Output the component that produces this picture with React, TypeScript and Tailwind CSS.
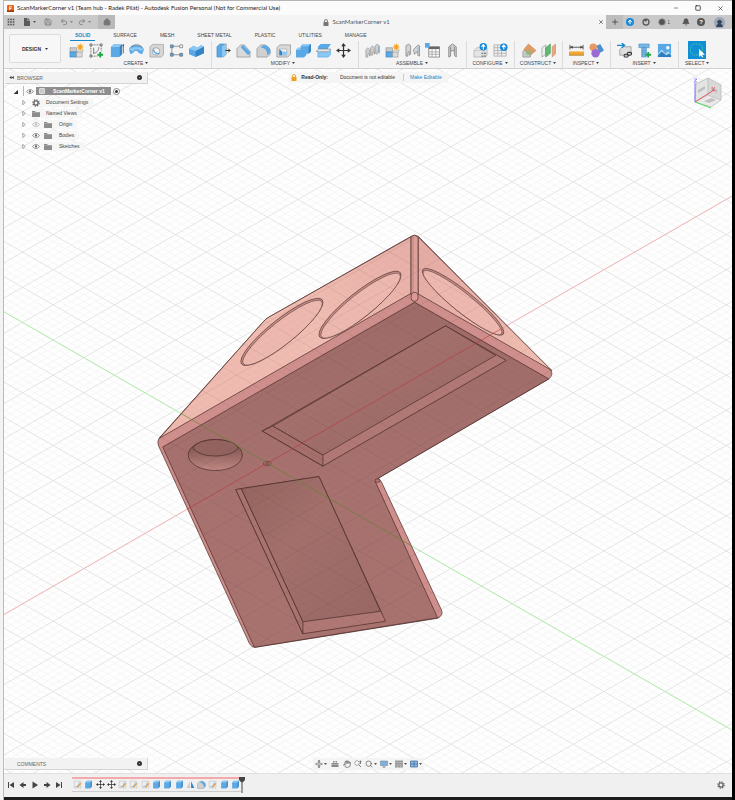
import { ReactNode } from "react"
import {
	ArrowUp,
	Bell,
	Clock,
	Hand,
	House,
	Minus,
	Plus,
	Redo2,
	Save,
	Search,
	Square,
	Undo2,
	UserRound,
	X,
} from "lucide-react"

const BLUE = "#5aa9e6"
const DARK_BLUE = "#3584c4"
const LIGHT_BLUE = "#8cc8f4"

const Caret = ({ className = "" }: { className?: string }) => (
	<svg viewBox="0 0 6 4" className={`h-[2px] w-[3px] ${className}`} aria-hidden="true">
		<path d="M0 0h6L3 4z" fill="currentColor" />
	</svg>
)

const Gear = () => (
	<svg viewBox="0 0 16 16" className="size-2" aria-hidden="true">
		<circle cx="8" cy="8" r="6.300" fill="none" stroke="#666" strokeWidth="2.500" strokeDasharray="2.500 2.450" />
		<circle cx="8" cy="8" r="4.200" fill="none" stroke="#666" strokeWidth="2.600" />
	</svg>
)

interface CubeProps {
	top?: string
	front?: string
	side?: string
}

/* extruded box, the base of most of the solid modelling icons */
const Cube = ({ top = LIGHT_BLUE, front = BLUE, side = DARK_BLUE }: CubeProps) => (
	<g>
		<path d="M2 4L5 1H14L11 4Z" fill={top} />
		<path d="M2 4H11V15H2Z" fill={front} />
		<path d="M11 4L14 1V12L11 15Z" fill={side} />
	</g>
)

const Spark = () => (
	<path
		d="M12 0l.8 2.400L15 1.300l-1.100 2.200L16 4.300l-2.100.8L15 7.300l-2.200-1.100L12 8.500l-.8-2.300L9 7.300l1.100-2.200L8 4.300l2.100-.8L9 1.300l2.200 1.100z"
		fill="#f5a623"
	/>
)

const Component = () => (
	<g>
		<path d="M1 5h7v4.500H1z" fill="#c9c9c9" stroke="#8c8c8c" strokeWidth=".6" />
		<path d="M1 9.500h7V15H1z" fill={BLUE} stroke={DARK_BLUE} strokeWidth=".6" />
		<path d="M8 9.500h6V15H8z" fill="#dcdcdc" stroke="#8c8c8c" strokeWidth=".6" />
		<path d="M8 9.500l2-2h5.500l-1.500 2z" fill="#efefef" stroke="#8c8c8c" strokeWidth=".5" />
		<Spark />
	</g>
)

const GreenPlus = () => <path d="M12 9.500v6M9 12.500h6" stroke="#22a447" strokeWidth="2" />

const icons: Record<string, ReactNode> = {
	"New Component": <Component />,
	"Create Sketch": (
		<g fill="none" stroke="#555" strokeWidth=".8">
			<path d="M2 2h11M2 2v12M13 2v7M2 14h7" strokeDasharray="2 1" />
			<path d="M4.500 11C8 11 10.500 8 10.500 4.500M5 5v6" />
			<g fill="#f4f4f4">
				<path d="M1 1h2v2H1zM12 1h2v2h-2zM1 13h2v2H1z" />
			</g>
			<GreenPlus />
		</g>
	),
	Extrude: (
		<g>
			<Cube />
			<path d="M15.300 11V2M14.300 3.500l1-2 .7 2" stroke="#333" strokeWidth=".7" fill="none" />
		</g>
	),
	Revolve: (
		<g>
			<path d="M0 7C1 1 14 1 16 7L14 12 10 10.500C10 8 5.500 8 5 10L1.500 12z" fill={BLUE} />
			<path d="M0 7C2 3.500 13 3.500 16 7L12 8.500C10 6.500 6 6.500 4.500 9z" fill={LIGHT_BLUE} />
			<path d="M2 4.500C5 1 11 1 14 4.500" stroke="#555" strokeWidth=".7" fill="none" />
		</g>
	),
	Hole: (
		<g>
			<path d="M1 4l3-2.500h11.500v11L13 15H1z" fill="#d6d6d6" stroke="#999" strokeWidth=".7" />
			<circle cx="7.500" cy="9" r="4" fill="#f5f5f5" stroke="#888" strokeWidth=".7" />
			<path d="M5 7a4 4 0 0 0 6 4 5 5 0 0 1-6-4" fill={BLUE} stroke={BLUE} />
		</g>
	),
	Pattern: (
		<g fill={BLUE} stroke="#666" strokeWidth=".7">
			<path d="M3 3.500h10M3 3.500v9h10" fill="none" />
			<path d="M1.500 2h3v3h-3zM11.500 11h3v3h-3zM1.500 11h3v3h-3z" />
			<path d="M11.500 2h3v3h-3z" fill="#fff" />
		</g>
	),
	"Create Form": (
		<g>
			<path d="M0 6L5 3 9 5 13 2 16 4V11L7 15 0 12z" fill={BLUE} />
			<path d="M0 6L5 3 9 5 13 2 16 4 7 8.500z" fill={LIGHT_BLUE} />
			<path d="M7 8.500L16 4V11L7 15z" fill={DARK_BLUE} />
		</g>
	),
	"Press Pull": (
		<g>
			<path d="M1 4l3-3h5v11l-3 3H1z" fill={BLUE} stroke={DARK_BLUE} strokeWidth=".6" />
			<path d="M6 4l3-3h2V12L8 15H6z" fill={LIGHT_BLUE} stroke="#888" strokeWidth=".5" />
			<path d="M10 8h5M13 6l2 2-2 2" stroke="#222" fill="none" />
		</g>
	),
	Fillet: (
		<g>
			<path d="M1 6l4-4h4l6 7v6H1z" fill="#d9d9d9" stroke="#8c8c8c" strokeWidth=".7" />
			<path d="M5 4.500L7.500 2l8 8-2.500 3z" fill={BLUE} />
		</g>
	),
	Chamfer: (
		<g>
			<path d="M1 6l4-4h5l5 5v5l-3 3H1z" fill="#d0d0d0" stroke="#8c8c8c" strokeWidth=".7" />
			<path d="M5 5l3-3c5 0 7.500 3 7.500 8L12 13C12 8 10 5 5 5z" fill={BLUE} />
		</g>
	),
	Shell: (
		<g>
			<path d="M1 5l3-3h11.500v10l-3 3H1z" fill="#d9d9d9" stroke="#888" strokeWidth=".7" />
			<path d="M3.500 6.500h8V13h-8z" fill="#f4f4f4" stroke="#999" strokeWidth=".5" />
			<path d="M3.500 6.500l3 2.500v4h-3z" fill={DARK_BLUE} />
			<path d="M6.500 9h5v4h-5z" fill={LIGHT_BLUE} />
		</g>
	),
	Combine: (
		<g>
			<path d="M5 3.500L7.500 1H16v8l-2.500 2.500H11V13l-2.500 2.500H0v-8L2.500 5H5z" fill={BLUE} />
			<path d="M5 3.500L7.500 1H16l-2.500 2.500zM0 7.500L2.500 5H5v2.500z" fill={LIGHT_BLUE} />
			<path d="M13.500 3.500L16 1v8l-2.500 2.500z" fill={DARK_BLUE} />
		</g>
	),
	"Split Body": (
		<g>
			<path d="M2 4l3-3h11l-3 4v2H2z" fill={BLUE} />
			<path d="M0 9l3-2.500h13L13 9z" fill="#eee" stroke="#777" strokeWidth=".6" />
			<path d="M2 10h11l3-2v4l-3 3H2z" fill={LIGHT_BLUE} stroke={BLUE} strokeWidth=".7" />
		</g>
	),
	Move: (
		<g>
			<path d="M8 2v12M2 8h12" stroke="#333" strokeWidth="1.300" />
			<path d="M8 0l2.500 3.500h-5zM8 16l2.500-3.500h-5zM0 8l3.500-2.500v5zM16 8l-3.500-2.500v5z" fill="#333" />
		</g>
	),
	"New Joint": (
		<g fill="#cfcfcf" stroke="#888" strokeWidth=".6">
			<path d="M1 15V7l2-2 2 2v7l-1-3-1 1v3zM6 13V5l2-2 2 2v7l-1-3-1 1v3z" />
			<path d="M11 11V3l2-2 2 2v8l-1-3-1 1v3z" />
			<path d="M15 3v7" stroke={BLUE} strokeWidth="1" />
		</g>
	),
	Assemble: <Component />,
	Joint: (
		<g stroke="#777" strokeWidth=".7" fill="#d4d4d4">
			<path d="M1 14V3l3-2 2 2v9l-1.500 1V9L3 10v4zM9 7l5-5 1.500 1v11l-2-1V9L10 12z" />
			<path d="M14 4v6" stroke={BLUE} />
		</g>
	),
	"Bill of Materials": (
		<g>
			<path d="M4 4h11.500v11H4z" fill="#fff" stroke="#777" strokeWidth=".8" />
			<path d="M4 4h11.500v2.500H4z" fill="#666" />
			<path d="M4 9.500h11.500M4 12h11.500M7.500 6v9M11.500 6v9" stroke="#999" strokeWidth=".8" />
			<path d="M0 0h5v5H0z" fill={BLUE} />
		</g>
	),
	"Rigid Group": (
		<path
			d="M4 15V4l4-3 4 3v11l-2-2V9L8 8 6 9v5zM6 4v5m4-5v5"
			fill="#cfcfcf"
			stroke="#777"
			strokeWidth=".8"
		/>
	),
	Configure: (
		<g>
			<path d="M1 8l3-3h11v8l-2 2H1z" fill="#e4e4e4" stroke="#aaa" strokeWidth=".7" />
			<path d="M1 8h11v7" fill="none" stroke="#bbb" strokeWidth=".6" />
			<circle cx="11" cy="4" r="4" fill="#1688d8" />
			<path d="M11 7V2M9 4l2-2.300L13 4" stroke="#fff" strokeWidth="1.200" fill="none" />
			<path d="M9 11h6M9 14h6" stroke="#777" strokeWidth="1.200" strokeDasharray="2 1" />
		</g>
	),
	"Configuration Table": (
		<g>
			<path d="M1 2h13v12H1z" fill="#eee" stroke="#aaa" strokeWidth=".8" />
			<path d="M1 5h13M1 8h13M1 11h13M5 2v12M9 2v12" stroke="#aaa" strokeWidth=".8" />
			<circle cx="11.500" cy="4.500" r="4" fill="#1688d8" />
			<path d="M11.500 7V2.500M9.500 4.500l2-2.300 2 2.300" stroke="#fff" strokeWidth="1.200" fill="none" />
		</g>
	),
	"Offset Plane": (
		<g>
			<path d="M2 9l5-4 3 2v8H2z" fill="#ccc" stroke="#888" strokeWidth=".7" />
			<path d="M3 7l5-6 8 7-6 5z" fill="#e29a63" stroke="#b97842" strokeWidth=".5" />
			<path d="M5 9l4-2 3 2-2 4H5z" fill="#79bd8b" opacity=".6" />
		</g>
	),
	Midplane: (
		<g>
			<path d="M1 5l4-3v10l-4 3z" fill="#eee" stroke="#888" strokeWidth=".6" />
			<path d="M5 5l5-4v10l-5 4z" fill="#5fba73" stroke="#3f9152" strokeWidth=".6" />
			<path d="M12 4l4-3v10l-4 4z" fill="#eda77c" stroke="#cf845a" strokeWidth=".6" />
		</g>
	),
	Measure: (
		<g>
			<path d="M1 4.500h14M1 2v5M15 2v5" stroke="#444" strokeWidth=".9" />
			<path d="M1 4.500l3-1.500v3zM15 4.500L12 3v3z" fill="#444" />
			<path d="M0 9h16v4H0z" fill="#f0a830" />
			<path d="M0 13h16" stroke="#a87318" strokeWidth=".8" />
		</g>
	),
	Interference: (
		<g>
			<circle cx="4.500" cy="4.500" r="4" fill="#e99a63" />
			<path d="M8 3l4-2 4 7-5 3z" fill="#4e8fd0" />
			<circle cx="7" cy="11" r="4.500" fill="#9a6bd3" />
		</g>
	),
	"Insert Derive": (
		<g>
			<path d="M3 7l3-3h9v7l-2 2H3z" fill="#dedede" stroke="#888" strokeWidth=".7" />
			<path d="M0 2.500h7M5 0l3 2.500L5 5" stroke="#1688d8" strokeWidth="1.500" fill="none" />
			<g fill="none" stroke="#333" strokeWidth="1.100">
				<rect x="7.500" y="12" width="4.500" height="3" rx="1.500" />
				<rect x="11" y="10" width="4.500" height="3" rx="1.500" />
			</g>
		</g>
	),
	"Insert Fastener": (
		<g>
			<path d="M2 1h11v4H2zM5 5h5v10H5z" fill="#78b7e6" stroke="#4b8fc5" strokeWidth=".6" />
			<path d="M5 8h5M5 10h5M5 12h5" stroke="#4b8fc5" strokeWidth=".6" />
			<GreenPlus />
		</g>
	),
	Canvas: (
		<g>
			<path d="M1 1h14v14H1z" fill="#58a8e6" />
			<circle cx="11.500" cy="5" r="1.800" fill="#fff" />
			<path d="M1 12l4-5 4 4.500 3-2.500 3 3v3H1z" fill="#b9dcf5" />
			<path d="M1 13l4-4 5 4 3-2 2 2v2H1z" fill="#2f7fc0" />
		</g>
	),
}

const toolGroups = [
	{
		label: "CREATE",
		wide: true,
		tools: ["New Component", "Create Sketch", "Extrude", "Revolve", "Hole", "Pattern", "Create Form"],
	},
	{
		label: "MODIFY",
		wide: true,
		tools: ["Press Pull", "Fillet", "Chamfer", "Shell", "Combine", "Split Body", "Move"],
	},
	{ label: "ASSEMBLE", tools: ["New Joint", "Assemble", "Joint", "Bill of Materials", "Rigid Group"] },
	{ label: "CONFIGURE", tools: ["Configure", "Configuration Table"] },
	{ label: "CONSTRUCT", tools: ["Offset Plane", "Midplane"] },
	{ label: "INSPECT", tools: ["Measure", "Interference"] },
	{ label: "INSERT", tools: ["Insert Derive", "Insert Fastener", "Canvas"] },
]

const ribbonTabs = ["SOLID", "SURFACE", "MESH", "SHEET METAL", "PLASTIC", "UTILITIES", "MANAGE"]

const TitleBar = () => (
	<header className="flex h-[15px] items-center border-t border-[#b5b5b5] bg-[#fbfbfb] pl-[3px] pr-px">
		<svg viewBox="0 0 16 16" className="mr-[3px] size-[7px] shrink-0" aria-hidden="true">
			<rect width="16" height="16" rx="2" fill="#e8651a" />
			<path d="M0 12h16v4H0z" fill="#a03c08" />
			<path d="M6 12V4h5M6 8h4" stroke="#fff" strokeWidth="2" fill="none" />
		</svg>
		<h1 className="flex-1 truncate font-[Lato,sans-serif] text-[6px] leading-[10px] text-[#222]">
			ScanMarkerCorner v1 (Team hub - Radek Pilát) - Autodesk Fusion Personal (Not for Commercial
			Use)
		</h1>
		<div className="flex text-[#222]">
			<button aria-label="Minimize" className="flex w-[22px] justify-center">
				<Minus className="size-[6px]" />
			</button>
			<button aria-label="Maximize" className="flex w-[22px] justify-center">
				<Square className="size-[6px]" strokeWidth={3} />
			</button>
			<button aria-label="Close" className="flex w-[22px] justify-center">
				<X className="size-[7px]" />
			</button>
		</div>
	</header>
)

const DocumentTabs = () => (
	<div className="flex h-[14px] items-center bg-[#c9c9c9] text-[#555]">
		<div className="flex w-[94px] shrink-0 items-center pl-[3px]">
			<button aria-label="Data panel">
				<svg viewBox="0 0 16 16" className="size-2">
					<path
						d="M1 1h4v4H1zM6 1h4v4H6zM11 1h4v4h-4zM1 6h4v4H1zM6 6h4v4H6zM11 6h4v4h-4zM1 11h4v4H1zM6 11h4v4H6zM11 11h4v4h-4z"
						fill="#555"
						stroke="#c9c9c9"
						strokeWidth=".8"
					/>
				</svg>
			</button>
			<button aria-label="File" className="ml-2 flex items-center gap-[2px]">
				<svg viewBox="0 0 16 16" className="size-2">
					<path d="M2 0h7v6h5v10H2zM10 0l4 5h-4z" fill="#5c5c5c" />
				</svg>
				<Caret />
			</button>
			<button aria-label="Save" className="ml-2 text-[#888]">
				<Save className="size-2" strokeWidth={3} />
			</button>
			<button aria-label="Undo" className="ml-2 flex items-center gap-[2px] text-[#888]">
				<Undo2 className="size-2" strokeWidth={3} />
				<Caret />
			</button>
			<button aria-label="Redo" className="ml-[5px] flex items-center gap-[2px] text-[#888]">
				<Redo2 className="size-2" strokeWidth={3} />
				<Caret />
			</button>
		</div>
		<button aria-label="Home" className="flex h-full w-[17px] items-center justify-center bg-[#b9b9b9]">
			<House className="size-2 fill-[#777] text-[#777]" />
		</button>
		<div className="flex h-full flex-1 items-center bg-[#f4f4f4] pr-[2px]">
			<div className="flex flex-1 items-center justify-center gap-[3px] font-[Lato,sans-serif] text-[6px] leading-[8px]">
				<svg viewBox="0 0 12 14" className="h-[7px] w-[6px]" aria-hidden="true">
					<path d="M3 7V4a3 3 0 0 1 6 0v3" fill="none" stroke="#777" strokeWidth="1.800" />
					<rect x="1" y="6" width="10" height="8" rx="1" fill="#777" />
				</svg>
				<span>ScanMarkerCorner v1</span>
			</div>
			<button aria-label="Close document">
				<X className="size-[6px]" strokeWidth={3} />
			</button>
		</div>
		<button aria-label="New design" className="flex h-full w-[17px] items-center justify-center bg-[#bdbdbd]">
			<Plus className="size-2" strokeWidth={3} />
		</button>
		<div className="flex items-center pr-[7px]">
			<button aria-label="Extensions" className="ml-[3px] rounded-full bg-[#1688d8] p-px text-white">
				<ArrowUp className="size-[6px]" strokeWidth={4} />
			</button>
			<button aria-label="Online status" className="ml-2">
				<svg viewBox="0 0 16 16" className="size-2">
					<circle cx="8" cy="8" r="6" fill="none" stroke="#555" strokeWidth="2.500" />
					<path d="M8 8L3 4h7z" fill="#555" />
				</svg>
			</button>
			<button aria-label="Job status" className="ml-2 flex items-center gap-px text-[5px] leading-[8px]">
				<Clock className="size-2 fill-[#555] stroke-[#999]" />1
			</button>
			<button aria-label="Notifications" className="ml-3">
				<Bell className="size-2 fill-[#555]" />
			</button>
			<button
				aria-label="Help"
				className="ml-[7px] size-2 rounded-full bg-[#555] text-[6px] font-bold leading-[8px] text-white"
			>
				?
			</button>
			<button
				aria-label="Account"
				className="ml-[9px] flex size-[11px] items-end justify-center rounded-full bg-[#9aa8b8]"
			>
				<UserRound className="size-[9px] fill-[#34425a] text-[#34425a]" />
			</button>
		</div>
	</div>
)

const Ribbon = () => (
	<div className="flex h-10 items-center overflow-hidden border-b border-[#d0d0d0] bg-[#f4f4f4] pl-[5px] text-[5px] leading-[6px] text-[#444]">
		<button className="mr-1 flex h-[29px] w-[52px] shrink-0 items-center justify-center gap-1 rounded-[2px] border border-[#dcdcdc] bg-[#f7f7f7] font-bold text-[#333]">
			DESIGN <Caret />
		</button>
		<div className="flex h-full flex-col">
			<nav className="flex h-3 gap-[13px] pl-[5px]">
				{ribbonTabs.map((tab, i) => (
					<button
						key={tab}
						className={
							i === 0
								? "border-b border-[#1688c8] px-[5px] font-bold text-[#1688c8]"
								: "border-b border-transparent px-[5px]"
						}
					>
						{tab}
					</button>
				))}
			</nav>
			<div className="flex flex-1">
				{toolGroups.map((group) => (
					<section
						key={group.label}
						className={`flex flex-col items-center border-r border-[#dcdcdc] ${
							group.wide ? "pl-px pr-[5px]" : "pl-[3px] pr-1"
						}`}
					>
						<div className="flex h-[18px] items-center">
							{group.tools.map((tool) => (
								<button key={tool} aria-label={tool} className="flex w-5 justify-center">
									<svg viewBox="0 0 16 16" className="size-[15px]">
										{icons[tool]}
									</svg>
								</button>
							))}
						</div>
						<button className="mt-px flex items-center gap-[2px]">
							{group.label} <Caret />
						</button>
					</section>
				))}
				<section className="flex flex-col items-center px-[6px]">
					<button aria-label="Select" className="flex h-[18px] items-center">
						<svg viewBox="0 0 18 18" className="size-[18px]">
							<path d="M0 0h18v18H0z" fill="#0f8fd6" />
							<path
								d="M5 3h7l2.500 3v5L12 14H5L2.500 11V6z"
								fill="none"
								stroke="#5fd0a0"
								strokeWidth=".8"
								strokeDasharray="1.500 1"
							/>
							<path d="M11 8v8l2-1.800 1 2.300 1.200-.6-1-2.200H17z" fill="#fff" />
						</svg>
					</button>
					<button className="mt-px flex items-center gap-[2px]">
						SELECT <Caret />
					</button>
				</section>
			</div>
		</div>
	</div>
)

const SLOPE = 0.5745
const ORIGIN = { x: 267, y: 463 }

/* lines of the isometric ground grid, step is the vertical distance between two of them */
const gridPath = (step: number, skip: number) => {
	let path = ""
	const count = Math.ceil(1100 / step)
	for (let i = -count; i <= count; i++) {
		if (skip && i % skip === 0) continue
		const y = ORIGIN.y + i * step
		const left = (ORIGIN.x + 300) * SLOPE
		const right = (1100 - ORIGIN.x) * SLOPE
		path += `M-300 ${y + left}L1100 ${y - right}M-300 ${y - left}L1100 ${y + right}`
	}
	return path
}

const MINOR_GRID = gridPath(7.02, 5)
const MAJOR_GRID = gridPath(35.1, 0)

const BODY =
	"M159 438L262 323Q265 319 269 317L410 237Q414 234 418 237L550 370Q553 375 548 379L378 478L381 482L441 610Q443 615 437 618L255 647Q251 647 249 643L158 445Q157 441 159 438Z"

/* circular pocket seen at an angle, with the thin wall of its far edge */
const Pocket = ({ cx, cy, ry, angle }: { cx: number; cy: number; ry: number; angle: number }) => (
	<g transform={`translate(${cx} ${cy}) rotate(${angle})`}>
		<ellipse rx="51.500" ry={ry} fill="#c98f88" strokeWidth=".6" />
		<ellipse rx="50" ry={ry - 1} cy="1" fill="#edb8af" strokeWidth=".5" />
	</g>
)

const Scene = () => (
	<svg
		viewBox="4 69 727 704"
		preserveAspectRatio="xMidYMid slice"
		className="absolute inset-0 size-full"
		role="img"
		aria-label="ScanMarkerCorner v1"
	>
		<defs>
			<linearGradient id="face" x1="0" y1="1" x2="1" y2="0">
				<stop offset="0" stopColor="#eeb9ae" />
				<stop offset=".6" stopColor="#f0bdb2" />
				<stop offset="1" stopColor="#e6aea7" />
			</linearGradient>
			<linearGradient id="side" x1="0" y1="0" x2="1" y2="1">
				<stop offset="0" stopColor="#e4aaa3" />
				<stop offset="1" stopColor="#f0bfb2" />
			</linearGradient>
			<linearGradient id="front" x1="0" y1="0" x2="0" y2="1">
				<stop offset="0" stopColor="#9e6b68" />
				<stop offset=".5" stopColor="#a6716e" />
				<stop offset="1" stopColor="#a8736f" />
			</linearGradient>
			<linearGradient id="floor" x1="0" y1="0" x2="1" y2="1">
				<stop offset="0" stopColor="#94645f" />
				<stop offset=".4" stopColor="#a3706c" />
				<stop offset="1" stopColor="#986764" />
			</linearGradient>
			<linearGradient id="hole" x1="0" y1="0" x2="0" y2="1">
				<stop offset="0" stopColor="#6f4846" />
				<stop offset="1" stopColor="#c18883" />
			</linearGradient>
			<clipPath id="body-clip">
				<path d={BODY} />
			</clipPath>
		</defs>

		<path d="M-400 -400H1300V1300H-400Z" fill="#fefefe" />
		<path d={MINOR_GRID} stroke="#f4f4f4" strokeWidth=".8" />
		<path d={MAJOR_GRID} stroke="#dedede" strokeWidth=".8" />
		<path d="M-300 789L1100 -15.600" stroke="#f6b0b0" strokeWidth=".9" />
		<path d="M-300 137.300L1100 941.600" stroke="#acf0a4" strokeWidth=".9" />

		<g stroke="#4a2c2a" strokeWidth=".7" strokeLinejoin="round">
			<path d={BODY} fill="#cf8f8c" />
			<path d="M159.500 438L262 323Q265 319 269 317L410.500 237V293.500Z" fill="url(#face)" />
			<path d="M417.500 237L551 370.500L417.500 294Z" fill="url(#side)" />
			<path d="M410.500 238Q414 233 417.500 238V295H410.500Z" fill="#e0a09b" />
			<path d="M412.500 237V293" stroke="#8a5c58" strokeWidth=".4" />
			<Pocket cx={281.5} cy={332} ry={12.5} angle={-38.6} />
			<Pocket cx={359.5} cy={305} ry={12.5} angle={-38.6} />
			<Pocket cx={462.5} cy={302} ry={10.5} angle={38.8} />
			<path d="M162.500 447L414 302.500L548 379L378 478L375 482L437 617.500L254 647Z" fill="url(#front)" />
			<ellipse cx="414" cy="297" rx="3.500" ry="4.500" fill="#dc9a96" />
			<ellipse cx="377" cy="480.500" rx="2.500" ry="1.800" fill="#b27672" />

			<path d="M445 326L505.500 360.500L322.500 466L262 431Z" fill="#b17975" />
			<path d="M262 431L272.500 426L322.500 455V466Z" fill="#a56f6b" />
			<path d="M445 326L495 355.500L322.500 455L272.500 426Z" fill="url(#floor)" />

			<path d="M235.500 489.500L318.500 476.500L385 621L302.500 633.500Z" fill="#b07874" />
			<path d="M235.500 489.500L241 488.500L302.500 621.500V633.500Z" fill="#a9736f" />
			<path d="M241 488.500L318.500 476.500L380 611L302.500 621.500Z" fill="url(#floor)" />

			<ellipse cx="215" cy="455" rx="27" ry="15.500" fill="url(#hole)" />
			<path d="M192.500 448Q197 440 215 439.500Q234 440 238 448Q231 456 215 456Q199 456 192.500 448Z" fill="#936360" />
			<g fill="none" stroke="#6b4440">
				<ellipse cx="267" cy="463.500" rx="4" ry="2.300" />
				<ellipse cx="267" cy="463.500" rx="1.800" ry="1.200" />
			</g>
		</g>

		<g clipPath="url(#body-clip)">
			<path d={MINOR_GRID} stroke="#5a3836" strokeOpacity=".03" strokeWidth=".7" />
			<path d={MAJOR_GRID} stroke="#5a3836" strokeOpacity=".12" strokeWidth=".8" />
			<path d="M100 559.100L500 329.200" stroke="#c8323c" strokeOpacity=".55" strokeWidth=".9" />
			<path d="M170 407.300L450 568.100" stroke="#5f8f2c" strokeOpacity=".6" strokeWidth=".9" />
		</g>
	</svg>
)

const ViewCube = () => (
	<svg viewBox="0 0 34 36" className="mr-2 h-9 w-[34px]" role="img" aria-label="View cube">
		<path d="M6 10L18 4V21L5 28Z" fill="#e4e4e4" />
		<path d="M18 4L31 11V26L18 21Z" fill="#d9d9d9" />
		<path d="M5 28L18 21L31 26L21 33Z" fill="#e9e9e9" />
		<path
			d="M6 10L18 4L31 11V26L21 33L5 28ZM18 4V21L31 26M18 21L5 28"
			fill="none"
			stroke="#b4b4b4"
			strokeWidth=".7"
		/>
		<path d="M8 16l7-4v3l-7 4zM21 13l6 3v3l-6-3zM14 27l8-3 4 2-7 3z" fill="#c0c0c0" />
		<path d="M5 28V9" stroke="#7a76f0" />
		<path d="M5 28L24 16" stroke="#e05a5a" />
		<path d="M5 28L21 34" stroke="#4be05a" />
		<g fill="none" strokeWidth=".8">
			<path d="M4 5h3L4 8h3" stroke="#7a76f0" />
			<path d="M22 13l3 4m0-4l-3 4" stroke="#e05a5a" />
		</g>
	</svg>
)

const Eye = ({ muted = false }: { muted?: boolean }) => (
	<svg viewBox="0 0 16 10" className="h-[5px] w-2" aria-hidden="true">
		<path
			d="M1 5Q8-3 15 5Q8 13 1 5Z"
			fill="#fff"
			stroke={muted ? "#aaa" : "#777"}
			strokeWidth="1.500"
		/>
		<circle cx="8" cy="5" r="2.300" fill={muted ? "#bbb" : "#666"} />
	</svg>
)

const Folder = () => (
	<svg viewBox="0 0 16 14" className="h-[7px] w-2" aria-hidden="true">
		<path d="M0 2h6l1.500 2H16v10H0z" fill="#8d8d8d" />
		<path d="M0 5h16" stroke="#b9b9b9" />
	</svg>
)

const PanelHeader = ({ title, collapse = false }: { title: string; collapse?: boolean }) => (
	<div className="flex h-3 w-[143px] items-center border-b border-r border-[#d5d5d5] bg-[#f2f2f2] pr-[5px] text-[5px] leading-[6px] text-[#666]">
		<div className="flex w-3 justify-center">
			{collapse && (
				<svg viewBox="0 0 12 8" className="h-[3px] w-[5px]" aria-hidden="true">
					<path d="M6 0v8L0 4zM12 0v8L6 4z" fill="#333" />
				</svg>
			)}
		</div>
		<h2 className="flex-1">{title}</h2>
		<button
			aria-label={`${title} options`}
			className="flex size-[5px] items-center justify-center rounded-full bg-[#333]"
		>
			<span className="size-px bg-[#999]" />
		</button>
	</div>
)

const treeItems = [
	{ label: "Document Settings", icon: "gear" },
	{ label: "Named Views", icon: "folder" },
	{ label: "Origin", icon: "folder", eye: "muted" },
	{ label: "Bodies", icon: "folder", eye: "on" },
	{ label: "Sketches", icon: "folder", eye: "on" },
]

const BrowserPanel = () => (
	<aside className="flex flex-col items-start text-[5px] leading-[7px] text-[#444]">
		<PanelHeader title="BROWSER" collapse />
		<div className="mt-px flex h-3 items-center pl-2">
			<button aria-label="Collapse ScanMarkerCorner v1">
				<svg viewBox="0 0 8 8" className="size-[5px]">
					<path d="M8 1v7H1z" fill="#333" />
				</svg>
			</button>
			<span className="ml-[5px] mr-[2px] h-[10px] border-l border-[#f0a0a0]" />
			<Eye />
			<button className="ml-[2px] flex h-2 items-center bg-[#8e8e8e] pl-[3px] pr-[6px] font-bold text-white">
				<span className="mr-2 size-[6px] rounded-[1px] border border-[#ddd] bg-[#c8c8c8]" />
				ScanMarkerCorner v1
			</button>
			<label className="ml-[2px] flex size-[7px] items-center justify-center rounded-full border border-[#888] bg-white">
				<input
					type="radio"
					aria-label="Activate ScanMarkerCorner v1"
					defaultChecked
					className="size-[3px] appearance-none rounded-full bg-[#333]"
				/>
			</label>
		</div>
		<ul>
			{treeItems.map(({ label, icon, eye }) => (
				<li key={label} className="flex h-[11px] items-center pl-[17px]">
					<button aria-label={`Expand ${label}`}>
						<svg viewBox="0 0 6 8" className="h-[5px] w-[4px]">
							<path d="M1 .5L5 4L1 7.500Z" fill="#fff" stroke="#666" strokeWidth=".9" />
						</svg>
					</button>
					<div className="ml-[6px] flex h-[9px] items-center bg-[#f5f5f5]/90 pr-[5px]">
						{eye && (
							<span className="mr-1">
								<Eye muted={eye === "muted"} />
							</span>
						)}
						{icon === "gear" ? <Gear /> : <Folder />}
						<span className={eye ? "ml-[7px]" : "ml-[6px]"}>{label}</span>
					</div>
				</li>
			))}
		</ul>
	</aside>
)

const ReadOnlyBar = () => (
	<div className="flex h-[11px] items-center bg-[#f5f5f5] px-[2px] text-[5px] leading-[7px] text-[#333]">
		<svg viewBox="0 0 12 14" className="mr-1 h-[7px] w-[6px]" aria-hidden="true">
			<path d="M3 7V4a3 3 0 0 1 6 0v3" fill="none" stroke="#f0a020" strokeWidth="1.800" />
			<rect x="1" y="6" width="10" height="8" rx="1" fill="#f0a020" />
		</svg>
		<strong>Read-Only:</strong>
		<span className="ml-3 border-r border-[#ccc] pr-2">Document is not editable</span>
		<a href="#edit" className="ml-[6px] mr-1 text-[#1b84c4]">
			Make Editable
		</a>
	</div>
)

const NavigationBar = () => (
	<div className="flex h-3 items-center gap-[3px] bg-[#f4f4f4] px-[2px] text-[#555]">
		<button aria-label="Orbit" className="flex items-center gap-px">
			<svg viewBox="0 0 16 16" className="size-2">
				<path d="M8 0v16M1 8l7-3 7 3-7 3z" fill="none" stroke="#777" strokeWidth="1.500" />
				<path d="M5 3l3-3 3 3zM5 13l3 3 3-3z" fill="#666" />
			</svg>
			<Caret />
		</button>
		<button aria-label="Look at" className="mx-px">
			<svg viewBox="0 0 16 16" className="size-2">
				<path d="M1 6h14v8H1zM4 2h3v3H4zM9 2h3v3H9z" fill="#888" />
				<path d="M1 9h14" stroke="#ddd" />
			</svg>
		</button>
		<button aria-label="Pan">
			<Hand className="size-2" />
		</button>
		<button aria-label="Zoom">
			<svg viewBox="0 0 16 16" className="size-2">
				<circle cx="6" cy="6" r="4.500" fill="#fff" stroke="#777" strokeWidth="1.300" />
				<path d="M9.500 9.500L14 14M13 2v6M11.500 3.500L13 1.500l1.500 2" stroke="#555" strokeWidth="1.500" fill="none" />
			</svg>
		</button>
		<button aria-label="Zoom window" className="flex items-center gap-px">
			<Search className="size-2" />
			<Caret />
		</button>
		<button aria-label="Display settings" className="flex items-center gap-px">
			<svg viewBox="0 0 16 16" className="size-2">
				<path d="M1 2h14v9H1z" fill="#83aed6" stroke="#5f7f9f" />
				<path d="M5 13h6v2H5z" fill="#777" />
			</svg>
			<Caret />
		</button>
		<button aria-label="Grid and snaps" className="flex items-center gap-px">
			<svg viewBox="0 0 16 16" className="size-2">
				<path d="M0 1h16v14H0z" fill="#999" />
				<path d="M0 5h16M0 10h16M5 10v5M11 10v5" stroke="#ccc" />
			</svg>
			<Caret />
		</button>
		<button aria-label="Viewports" className="flex items-center gap-px">
			<svg viewBox="0 0 16 16" className="size-2">
				<path d="M1 2h14v12H1zM8 2v12M1 8h14" fill="#8db9e0" stroke="#3c6f9f" strokeWidth="1.500" />
			</svg>
			<Caret />
		</button>
	</div>
)

const Viewport = () => (
	<main className="relative flex-1">
		<Scene />
		<div className="absolute inset-0 flex flex-col justify-between pb-[3px] pl-px pt-[3px]">
			<div className="grid grid-cols-[1fr_auto_1fr] items-start">
				<BrowserPanel />
				<ReadOnlyBar />
				<div className="flex justify-end pt-[2px]">
					<ViewCube />
				</div>
			</div>
			<div className="grid grid-cols-[1fr_auto_1fr] items-end">
				<PanelHeader title="COMMENTS" />
				<NavigationBar />
			</div>
		</div>
	</main>
)

const playback = [
	{ label: "Go to start", path: "M2 2h2v12H2zM14 2v12L5 8z" },
	{ label: "Step back", path: "M9 2v12L1 8zM9 6h5v4H9z" },
	{ label: "Play", path: "M3 1v14l11-7z" },
	{ label: "Step forward", path: "M7 2v12l8-6zM2 6h5v4H2z" },
	{ label: "Go to end", path: "M12 2h2v12h-2zM2 2v12l9-6z" },
]

const features = [
	"sketch",
	"extrude",
	"move",
	"move",
	"sketch",
	"sketch",
	"sketch",
	"extrude",
	"extrude",
	"extrude",
	"mirror",
	"fillet",
	"sketch",
	"extrude",
	"extrude",
]

const featureIcons: Record<string, ReactNode> = {
	sketch: (
		<g fill="none">
			<path d="M2 2h12v12H2z" fill="#eee" stroke="#aaa" strokeDasharray="2 1" />
			<path d="M4 12C9 12 11 8 11 4" stroke="#6b9fc8" strokeWidth="1.200" />
			<path d="M8 13l6-7" stroke="#e5953c" strokeWidth="2" />
		</g>
	),
	extrude: <Cube />,
	move: icons.Move,
	mirror: (
		<g>
			<path d="M7 2v12H1z" fill="#ccc" />
			<path d="M9 2v12h6z" fill={DARK_BLUE} />
		</g>
	),
	fillet: icons.Chamfer,
}

const Timeline = () => (
	<footer className="flex h-6 items-center border-t border-[#e0e0e0] bg-[#f0f0f0] pb-[2px] pl-[3px] pr-[7px]">
		<div className="flex w-[65px] shrink-0 items-center gap-1 text-[#444]">
			{playback.map(({ label, path }) => (
				<button key={label} aria-label={label}>
					<svg viewBox="0 0 16 16" className="size-2">
						<path d={path} fill="currentColor" />
					</svg>
				</button>
			))}
		</div>
		<div className="flex items-start">
			<div className="w-[169px] border-t-2 border-[#f4aaaa]">
				<ol className="grid grid-cols-[repeat(15,1fr)] border-b border-[#ccc] pb-[2px] pt-px">
					{features.map((feature, i) => (
						<li key={i} className="flex justify-center">
							<button aria-label={`${feature} ${i + 1}`}>
								<svg viewBox="0 0 16 16" className="size-[9px]">
									{featureIcons[feature]}
								</svg>
							</button>
						</li>
					))}
				</ol>
			</div>
			<svg viewBox="0 0 6 16" className="-ml-[2px] h-4 w-[6px]" aria-hidden="true">
				<path d="M0 0h6v3L3.500 5.500V16h-1V5.500L0 3z" fill="#444" />
			</svg>
		</div>
		<button aria-label="Timeline settings" className="ml-auto">
			<Gear />
		</button>
	</footer>
)

export default function App() {
	return (
		<div className="flex min-h-screen bg-black font-['Liberation_Sans',Arial,sans-serif]">
			<div className="w-[3px] shrink-0 bg-[#f3f3f3]" />
			<div className="mr-[3px] flex min-w-0 flex-1 flex-col border-l border-[#bbb]">
				<TitleBar />
				<DocumentTabs />
				<Ribbon />
				<Viewport />
				<Timeline />
				<div className="h-[3px] bg-[#1e1b1c]" />
			</div>
		</div>
	)
}
